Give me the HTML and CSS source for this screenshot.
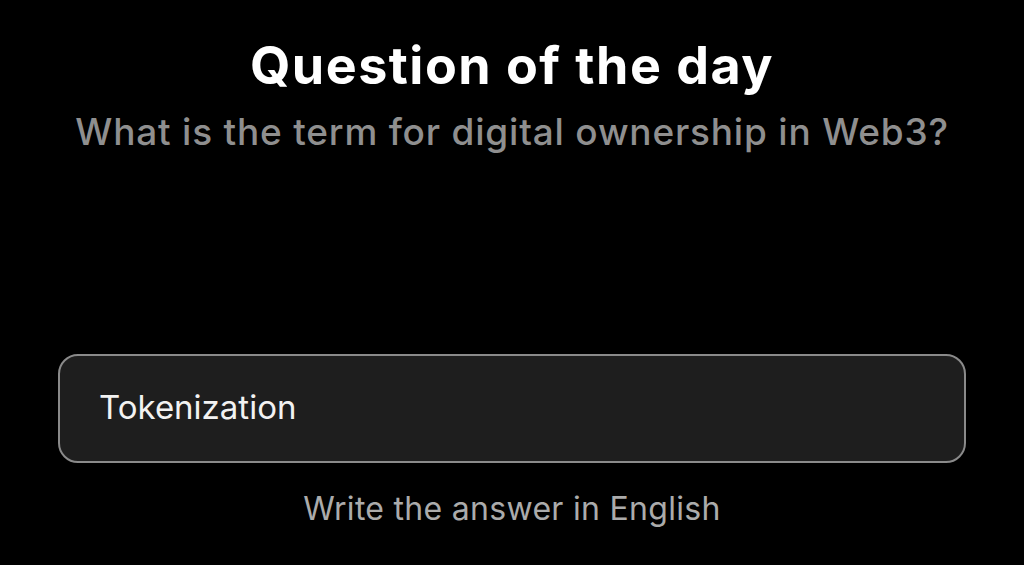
FILE: index.html
```html
<!DOCTYPE html>
<html lang="en">
<head>
<meta charset="utf-8">
<title>Question of the day</title>
<link rel="stylesheet" href="styles.css">
</head>
<body>
<main class="page">
  <header class="head">
    <h1 class="title">Question of the day</h1>
    <p class="question">What is the term for digital ownership in Web3?</p>
  </header>
  <section class="answer">
    <div class="field"><span class="field-text">Tokenization</span></div>
    <p class="hint">Write the answer in English</p>
  </section>
</main>
</body>
</html>
```
FILE: styles.css
```css
* { box-sizing: border-box; }
html, body { margin: 0; padding: 0; background: #000; }
body {
  font-family: "Inter", "Noto Sans", sans-serif;
  color: #fff;
  width: 1024px;
  height: 565px;
  overflow: hidden;
}
.page {
  display: flex;
  flex-direction: column;
  align-items: center;
  padding-top: 35px;
}
.head {
  display: flex;
  flex-direction: column;
  align-items: center;
}
.title {
  margin: 0;
  font-size: 52px;
  line-height: 62px;
  font-weight: 700;
  letter-spacing: 1.5px;
  white-space: nowrap;
}
.question {
  margin: 13px 0 0;
  font-size: 37px;
  line-height: 44px;
  color: #8f8f8f;
  font-weight: 500;
  letter-spacing: 0.8px;
  white-space: nowrap;
}
.answer {
  margin-top: 200px;
  width: 908px;
  display: flex;
  flex-direction: column;
  align-items: center;
}
.field {
  width: 100%;
  height: 109px;
  border: 2px solid #8a8a8a;
  border-radius: 20px;
  background: #1e1e1e;
  display: flex;
  align-items: center;
  padding-left: 39px;
  padding-bottom: 4px;
}
.field-text {
  font-size: 33px;
  font-weight: 400;
  color: #f2f2f2;
}
.hint {
  margin: 26px 0 0;
  font-size: 32px;
  line-height: 40px;
  color: #ababab;
  font-weight: 400;
  letter-spacing: 0.3px;
  white-space: nowrap;
}
```
